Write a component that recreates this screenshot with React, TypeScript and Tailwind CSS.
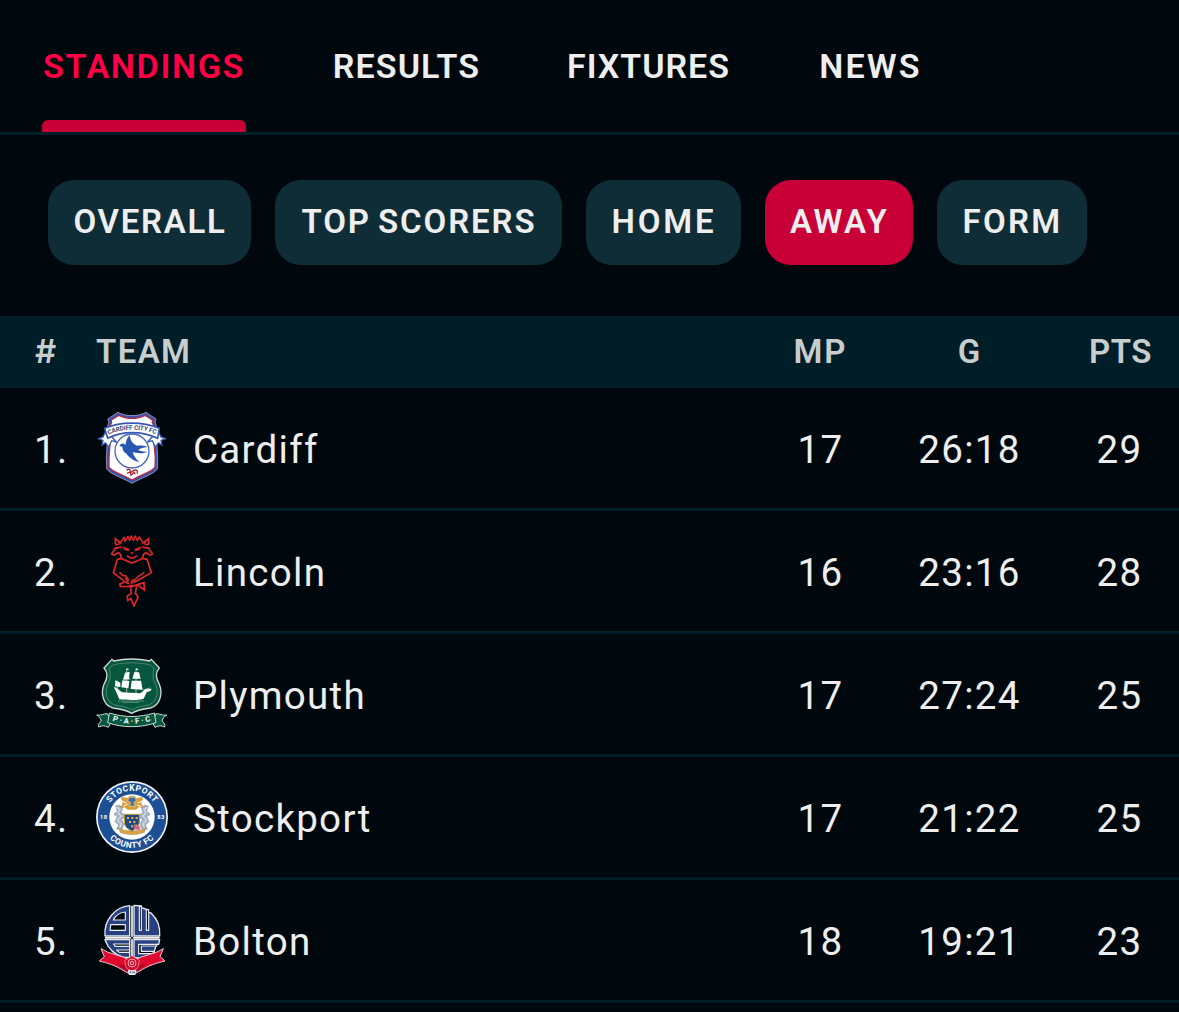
import type { ReactNode } from "react";

const VIEW = "33 36 216 216";

function CardiffCrest() {
  return (
    <svg viewBox={VIEW} className="size-[72px]">
      <path d="M68 57 L99 37 C122 50 160 50 183 37 L213 57 C209 66 210 70 214 76 L215 120 L218 170 L217 206 C208 222 176 230 141 250 C106 230 74 222 65 206 L64 170 L67 120 L68 76 C72 70 73 66 68 57Z" fill="#3453b4" stroke="#b9c0d4" strokeWidth="2" />
      <path d="M79 60 L101 46 C124 58 158 58 181 46 L202 60 C200 67 202 70 206 76 L206 120 L211 172 L210 202 C201 215 173 222 141 240 C109 222 81 215 72 202 L72 172 L76 120 L76 76 C80 70 81 67 79 60Z" fill="#fff" stroke="#b72c3e" strokeWidth="4" />
      <circle cx="141" cy="153" r="51" fill="#fff" stroke="#4a66b5" strokeWidth="4" />
      <path d="M103 138 C107 129 115 128 121 135 C124 125 124 115 134 105 C135 121 144 132 156 137 C168 136 178 137 188 141 C175 142 165 146 159 150 C169 154 179 156 188 155 C172 162 154 159 143 157 C146 168 154 178 163 187 C145 182 130 171 123 160 C114 156 113 146 112 140Z" fill="#2857b3" />
      <path d="M40 116 L54 111 L60 98 L78 108 L94 126 L80 122 L71 141 L61 128 L51 136 L54 121Z M242 116 L228 111 L222 98 L204 108 L188 126 L202 122 L211 141 L221 128 L231 136 L228 121Z" fill="#fff" stroke="#3c5fb8" strokeWidth="4" strokeLinejoin="round" />
      <path d="M59 85 C107 64 172 64 223 85 L218 115 C171 92 111 92 68 115Z" fill="#fff" stroke="#3858b5" strokeWidth="5" strokeLinejoin="round" />
      <path id="cardiff-arc" d="M70 104 C112 84 170 84 216 104" fill="none" />
      <text className="fill-[#33477f] font-['Roboto'] text-[19px] font-bold">
        <textPath href="#cardiff-arc" startOffset="1" textLength="146">CARDIFF CITY FC</textPath>
      </text>
      <path d="M125 211 C129 205 137 208 136 215 C142 220 143 209 149 211 C158 207 157 217 157 221 M126 220 L135 216 L138 226 L147 217 L151 222" fill="none" stroke="#ad2430" strokeWidth="4" strokeLinejoin="round" />
    </svg>
  );
}

function LincolnCrest() {
  return (
    <svg viewBox={VIEW} className="size-[72px]" fill="none" stroke="#e3262b" strokeWidth="5" strokeLinejoin="miter">
      <path d="M110 61 L91 47 L92 66 M172 61 L191 47 L190 66" />
      <path d="M93 67 L104 62 L100 56 M189 67 L178 62 L182 56" strokeWidth="4" />
      <path d="M107 58 L118 42 L120 56 L129 39 L134 53 L139 38 L145 53 L151 38 L157 54 L163 41 L174 59" strokeWidth="4" strokeLinejoin="bevel" />
      <path d="M110 72 L90 76 C88 85 81 88 80 93 L87 96 L100 89 L106 94 L110 107 L141 120 L172 107 L176 94 L182 89 L195 96 L202 93 C201 88 194 85 192 76 L172 72" />
      <path d="M113 73 L133 80 M169 73 L149 80 M118 78 L131 82 M164 78 L151 82 M137 90 L145 90" />
      <path d="M126 98 L136 105 L146 105 L156 98" />
      <path d="M110 106 L97 109 L93 123 L85 149 L122 178 L132 182 M172 106 L186 109 L191 124 L199 149 L155 174 L137 181" />
      <path d="M103 148 L115 158 L122 158 L132 172 M121 164 L130 178 M147 170 L138 176 M178 148 L160 160 L147 173" strokeWidth="4.5" />
      <path d="M117 178 L105 183 L106 190 L139 191 L177 179 L178 201 L160 187 L133 188" />
      <path d="M137 193 L139 211 L127 219 L128 232 L138 227 L147 249 L159 222 L151 210 L155 191" />
    </svg>
  );
}

function PlymouthCrest() {
  return (
    <svg viewBox={VIEW} className="size-[72px]">
      <path d="M81 40 L86 45 C118 38 162 38 194 45 L199 40 L223 66 C208 82 213 98 223 115 C234 142 226 178 196 186 C168 190 153 193 140 202 C127 193 112 190 84 186 C54 178 46 142 57 115 C67 98 72 82 57 66Z" fill="#07563e" stroke="#ced9d3" strokeWidth="4" strokeLinejoin="round" />
      <path d="M84 57 C119 48 161 48 196 57 L208 67 C201 84 204 102 213 118 C222 144 213 170 190 177 C164 182 151 184 140 192 C129 184 116 182 90 177 C67 170 58 144 67 118 C76 102 79 84 72 67Z" fill="none" stroke="#73998b" strokeWidth="2" />
      <path d="M86 122 L97 128 L111 139 L166 142 L181 130 L200 128 L197 134 L185 139 L176 158 C155 164 125 162 103 160 L96 143Z" fill="#fff" />
      <path d="M120 80 L134 77 L132 97 L137 100 L114 101 Z M148 78 L162 79 L167 98 L142 98Z M112 103 L133 105 L130 127 L109 124Z M140 104 L168 104 L173 131 L137 129Z M91 103 L106 110 L106 123 L90 121Z M125 67 L133 70 L125 73Z M153 67 L162 70 L153 73Z" fill="#fff" />
      <path d="M125 68 V140 M153 67 V142 M97 104 V137 M174 132 L195 126 M92 123 L106 138" stroke="#e8efea" strokeWidth="2" />
      <path d="M99 165 H176 M112 169 H162" stroke="#a4bcb2" strokeWidth="2" strokeDasharray="7 2" />
      <path d="M35 207 C48 210 56 202 67 203 L78 229 L70 244 C58 238 52 238 41 243 C38 236 43 230 49 225 C46 216 42 211 35 207Z M245 207 C232 210 224 202 213 203 L202 229 L210 244 C222 238 228 238 239 243 C242 236 237 230 231 225 C234 216 238 211 245 207Z" fill="#07563e" stroke="#ced9d3" strokeWidth="3" strokeLinejoin="round" />
      <path d="M73 201 C117 215 164 215 208 201 L213 230 C168 246 111 246 68 230Z" fill="#07563e" stroke="#ced9d3" strokeWidth="3" strokeLinejoin="round" />
      <path id="plymouth-arc" d="M79 223 C119 237 162 237 203 223" fill="none" />
      <text className="fill-white font-['Roboto'] text-[23px] font-bold">
        <textPath href="#plymouth-arc" startOffset="3" textLength="119">P·A·F·C</textPath>
      </text>
    </svg>
  );
}

function StockportCrest() {
  return (
    <svg viewBox={VIEW} className="size-[72px]">
      <circle cx="141" cy="144" r="108" fill="#f2f5fa" />
      <circle cx="141" cy="144" r="103" fill="#1d4f96" />
      <circle cx="141" cy="144" r="68" fill="#fff" />
      <path id="stockport-top" d="M66 122 A78 78 0 0 1 216 122" fill="none" />
      <path id="stockport-bottom" d="M62 193 A93 93 0 0 0 220 193" fill="none" />
      <g className="fill-white font-['Roboto'] font-bold">
        <text className="text-[25px]" textAnchor="middle">
          <textPath href="#stockport-top" startOffset="50%" textLength="157">STOCKPORT</textPath>
        </text>
        <text className="text-[25px]" textAnchor="middle">
          <textPath href="#stockport-bottom" startOffset="50%" textLength="150">COUNTY FC</textPath>
        </text>
        <text x="45" y="151" className="text-[17px]">18</text>
        <text x="217" y="151" className="text-[17px]">83</text>
      </g>
      <path d="M108 88 C114 78 120 89 128 86 C136 77 148 77 153 86 C162 91 168 79 174 89 L169 103 L177 119 L162 114 L153 122 L128 122 L119 115 L104 120 L113 103Z" fill="#d99e34" />
      <path d="M132 85 L151 84 L154 95 L147 101 L151 111 L133 112 L137 101 L128 96Z" fill="#4e6e97" stroke="#f1dbac" strokeWidth="2" />
      <path d="M111 96 L125 102 M158 102 L172 96 M116 111 L127 106 M156 108 L168 112" stroke="#fff" strokeWidth="3" />
      <path d="M92 111 L105 109 L112 121 L107 132 L119 137 L120 149 L108 147 L116 166 L112 178 L95 181 L101 168 L90 158 L97 143 L87 135 L98 127Z M190 111 L177 109 L170 121 L175 132 L163 137 L162 149 L174 147 L166 166 L170 178 L187 181 L181 168 L192 158 L185 143 L195 135 L184 127Z" fill="#aab8c7" stroke="#78899e" strokeWidth="2" />
      <path d="M94 115 L106 121 L99 131 L109 142 L97 153 L109 164 L104 176 M188 115 L176 121 L183 131 L173 142 L185 153 L173 164 L178 176" fill="none" stroke="#e9edf2" strokeWidth="3" />
      <path d="M103 177 C118 189 162 189 181 178 L178 190 C153 199 129 199 105 190Z" fill="#dca43c" stroke="#8d8170" strokeWidth="1.5" />
      <path d="M118 136 H163 V162 C160 176 149 181 141 187 C130 180 121 177 118 162Z" fill="#204b88" stroke="#d59a2d" strokeWidth="3" />
      <path d="M126 144 h6 v6 h-6z M139 144 h6 v6 h-6z M152 144 h6 v6 h-6z M132 156 h6 v6 h-6z M145 156 h6 v6 h-6z M138 169 h6 v6 h-6z" fill="#e6b33b" />
      <path d="M148 168 L166 173 L163 184 L150 181Z M153 165 L160 187 M147 177 L167 177" fill="#c8344e" stroke="#e8a4ad" strokeWidth="2" />
    </svg>
  );
}

function BoltonCrest() {
  return (
    <svg viewBox={VIEW} className="size-[72px]">
      <path d="M134 41 A81 84 0 0 0 60 132 H134Z M147 40 L169 42 V47 L190 54 V61 L198 63 A84 84 0 0 1 224 132 H147Z M60 143 H134 V196 H116 A84 84 0 0 1 60 143Z M147 143 H224 L221 157 H214 L206 184 L172 199 L147 196Z" fill="#27407f" stroke="#e7ebf3" strokeWidth="4" strokeLinejoin="round" />
      <g fill="#02090e" stroke="#e7ebf3" strokeWidth="3.5" strokeLinejoin="round">
        <path d="M121 60 V84 H85 C90 72 104 62 121 60Z M77 98 H121 V115 H75Z" />
        <path d="M163 43 H169 V115 H163Z M184 53 H191 V115 H184Z" />
        <path d="M86 156 H134 V163 H90Z M95 174 H134 V181 H103Z" />
        <path d="M161 157 H217 L215 162 H169 V178 H207 L203 185 H161Z" />
      </g>
      <path d="M141 41 V194 M60 137.500 H224" stroke="#f3f5f9" strokeWidth="5" />
      <circle cx="141" cy="138" r="3.500" fill="#111827" />
      <path d="M48 170 C72 187 107 188 133 204 L136 246 L121 239 C92 220 67 213 43 207 L58 194Z M235 170 C211 187 177 188 149 204 L147 246 L161 239 C190 220 215 213 240 207 L225 194Z" fill="#e0082f" stroke="#f0cbd1" strokeWidth="3" strokeLinejoin="round" />
      <path d="M101 216 L128 238 L126 226Z M181 216 L154 238 L156 226Z" fill="#9f0620" stroke="#9f0620" strokeWidth="3" />
      <path d="M141 191 L163 206 L158 229 L141 237 L124 229 L119 206Z" fill="#d50b2a" stroke="#e8a3ad" strokeWidth="2" />
      <circle cx="141" cy="213" r="12" fill="none" stroke="#f2a7b3" strokeWidth="3" />
      <circle cx="141" cy="213" r="5" fill="none" stroke="#fff" strokeWidth="2" />
      <path d="M128 235 H155 L151 249 H132Z" fill="#eff2f6" />
      <path d="M134 241 h4 m2 0 h3 m2 0 h5" stroke="#53658b" strokeWidth="5" />
    </svg>
  );
}

const tabs = [
  { label: "STANDINGS", box: "w-[204px] mr-[86px] tracking-[1.7px] text-[#ff0046]", active: true },
  { label: "RESULTS", box: "w-[149px] mr-[85px] tracking-[1.1px]" },
  { label: "FIXTURES", box: "w-[165px] mr-[87px] tracking-[1px]" },
  { label: "NEWS", box: "w-[105px] tracking-[2.2px]" },
];

const filters = [
  { label: "OVERALL", box: "w-[203px] tracking-[1.7px] bg-[#0f2d37]" },
  { label: "TOP SCORERS", box: "w-[287px] tracking-[1.9px] [word-spacing:-3px] bg-[#0f2d37]" },
  { label: "HOME", box: "w-[155px] tracking-[2.8px] bg-[#0f2d37]" },
  { label: "AWAY", box: "w-[148px] tracking-[2.3px] bg-[#c80037]" },
  { label: "FORM", box: "w-[150px] tracking-[2.3px] bg-[#0f2d37]" },
];

type Row = { rank: number; team: string; crest: ReactNode; played: number; goals: string; points: number };

const rows: Row[] = [
  { rank: 1, team: "Cardiff", crest: <CardiffCrest />, played: 17, goals: "26:18", points: 29 },
  { rank: 2, team: "Lincoln", crest: <LincolnCrest />, played: 16, goals: "23:16", points: 28 },
  { rank: 3, team: "Plymouth", crest: <PlymouthCrest />, played: 17, goals: "27:24", points: 25 },
  { rank: 4, team: "Stockport", crest: <StockportCrest />, played: 17, goals: "21:22", points: 25 },
  { rank: 5, team: "Bolton", crest: <BoltonCrest />, played: 18, goals: "19:21", points: 23 },
];

export default function App() {
  return (
    <main className="h-[1012px] w-[1179px] overflow-hidden bg-[#00080d] font-['Roboto','Inter',sans-serif] text-[#eeeeee]">
      <nav className="flex h-[135px] border-b-[3px] border-[#001e28] pl-[42px]">
        {tabs.map((t) => (
          <button key={t.label} className={`flex flex-col justify-between whitespace-nowrap text-[34px] leading-[40px] font-semibold ${t.box}`}>
            <span className="mt-[46px] w-full text-center">{t.label}</span>
            {t.active && <span className="h-3 w-full rounded-t-md bg-[#c80037]" />}
          </button>
        ))}
      </nav>

      <div className="flex gap-6 pt-[45px] pb-[51px] pl-12">
        {filters.map((f) => (
          <button key={f.label} className={`h-[85px] rounded-[26px] pb-[1px] pl-px text-center text-[33px] font-semibold whitespace-nowrap ${f.box}`}>
            {f.label}
          </button>
        ))}
      </div>

      <div className="grid h-[72px] grid-cols-[96px_1fr_116px_182px_119px] items-center bg-[#001e28] text-center text-[33px] font-semibold text-[#c8cdcd]">
        <span className="pl-[35px] text-left font-['Inter']">#</span>
        <span className="text-left tracking-[1.4px]">TEAM</span>
        <span className="pl-px tracking-[2px]">MP</span>
        <span>G</span>
        <span className="pl-0.5 tracking-[0.6px]">PTS</span>
      </div>

      {rows.map((r) => (
        <div key={r.rank} className="grid h-[123px] grid-cols-[96px_97px_1fr_116px_182px_119px] items-center border-b-[3px] border-[#001e28] text-center text-[38.5px] tracking-[1.3px]">
          <span className="pt-[3px] pl-[34px] text-left">{r.rank}.</span>
          {r.crest}
          <span className="pt-[3px] text-left">{r.team}</span>
          <span className="pt-[3px] pl-px">{r.played}</span>
          <span className="pt-[3px] pl-px">{r.goals}</span>
          <span className="pt-[3px]">{r.points}</span>
        </div>
      ))}
    </main>
  );
}
